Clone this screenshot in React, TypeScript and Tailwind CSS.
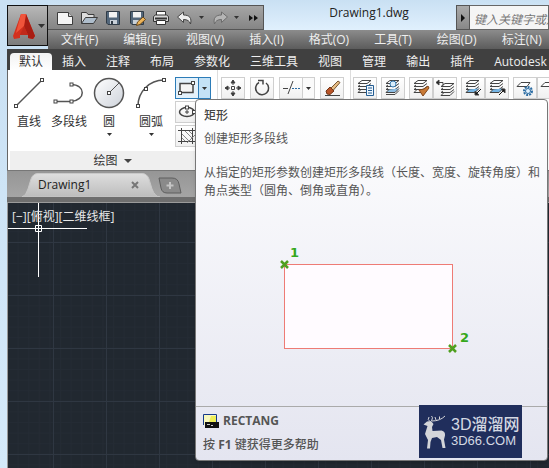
import React from "react";

const menus = ["文件(F)", "编辑(E)", "视图(V)", "插入(I)", "格式(O)", "工具(T)", "绘图(D)", "标注(N)"];
const tabs = ["默认", "插入", "注释", "布局", "参数化", "三维工具", "视图", "管理", "输出", "插件", "Autodesk"];

const Node = ({ x, y }: { x: number; y: number }) => (
  <rect x={x - 1.5} y={y - 1.5} width="3" height="3" fill="#fff" stroke="#444" />
);

const Down = ({ className = "" }: { className?: string }) => (
  <svg viewBox="0 0 5 3" className={`h-[3px] w-[5px] ${className}`}>
    <path d="M0 0h5L2.500 3z" fill="#333" />
  </svg>
);

const QuickButton = ({ label, children }: { label: string; children: React.ReactNode }) => (
  <button aria-label={label} className="flex w-6 shrink-0 items-center justify-center">
    <svg viewBox="0 0 18 16" className="h-4 w-[18px]">{children}</svg>
  </button>
);

const BigButton = ({ label, menu, children }: { label: string; menu?: boolean; children: React.ReactNode }) => (
  <button className="flex w-10 flex-col items-center whitespace-nowrap">
    <svg viewBox="0 0 32 32" fill="none" stroke="#555" className="h-8 w-8">{children}</svg>
    <span className="mt-1 leading-[18px]">{label}</span>
    {menu && <Down className="mt-0.5" />}
  </button>
);

const Tool = ({ label, children }: { label: string; children: React.ReactNode }) => (
  <button aria-label={label} className="flex h-[22px] w-6 shrink-0 items-center justify-center border border-[#cfcfcf] bg-gradient-to-b from-white to-[#f0f0f0]">
    <svg viewBox="0 0 20 18" fill="none" stroke="#444" className="h-[18px] w-5">{children}</svg>
  </button>
);

const Sheets = ({ blue = "none" }: { blue?: string }) => (
  <>
    <path d="M7 1.500h9l-4 3H3z" fill="#fff" />
    <path d="M5 6L3 7.500h9l4-3M5 9L3 10.500h9l4-3" />
    <path d="M6 10.500L3 13.500h9l4-4" fill={blue} />
  </>
);

const TitleBar = () => (
  <div className="flex h-[30px] bg-gradient-to-b from-[#c9e0f3] to-[#e0f0fd] pt-[5px]">
    <div className="flex w-[216px] shrink-0 items-center border border-l-0 border-[#555] bg-gradient-to-b from-[#a5a5a5] to-[#858585] pl-[5px]">
      <QuickButton label="新建">
        <path d="M1.500 2.500h11l4 4v8h-15z" fill="#f4f4f4" stroke="#3c3c3c" />
        <path d="M12.500 2.500v4h4" fill="#ccc" stroke="#3c3c3c" />
      </QuickButton>
      <QuickButton label="打开">
        <path d="M1.500 13.500v-11h5l1.500 2h6v2.500" fill="#ddd" stroke="#3c3c3c" />
        <path d="M1.500 13.500l4-6h12l-4 6z" fill="#aebdcb" stroke="#3c3c3c" />
      </QuickButton>
      <QuickButton label="保存">
        <path d="M2.500 1.500h13v13h-11.500l-1.500-1.500z" fill="#53677b" stroke="#303b46" />
        <path d="M5 2h8v5.500H5z" fill="#f2f2f2" /><path d="M6 10h7v4H6z" fill="#c8d0d8" /><path d="M7 11h2v3H7z" fill="#303b46" />
      </QuickButton>
      <QuickButton label="另存为">
        <path d="M2.500 1.500h13v13h-11.500l-1.500-1.500z" fill="#53677b" stroke="#303b46" />
        <path d="M5 2h8v5.500H5z" fill="#f2f2f2" /><path d="M5 10h6v4H5z" fill="#c8d0d8" />
        <path d="M8.500 15.500l1-3.500 5.500-5 2.500 2.500-5.500 5z" fill="#edb45a" stroke="#6b4a1c" />
      </QuickButton>
      <QuickButton label="打印">
        <path d="M4.500 6V1.500h9V6" fill="#fff" stroke="#333" />
        <path d="M1.500 6.500l2-1.500h11l2 1.500v5h-15z" fill="#d7d7d7" stroke="#333" />
        <path d="M3 8.500h12" stroke="#333" strokeWidth="2" />
        <path d="M4.500 10.500h9v4h-9z" fill="#fff" stroke="#333" />
      </QuickButton>
      <QuickButton label="放弃">
        <path d="M1.500 7l6-5v3c6 0 8.500 3 7 9-1-3-3-4.500-7-4.500v3z" fill="#eee" stroke="#444" />
      </QuickButton>
      <Down className="mr-1 ml-0.5 shrink-0" />
      <QuickButton label="重做">
        <path d="M16.500 7l-6-5v3c-6 0-8.500 3-7 9 1-3 3-4.500 7-4.500v3z" fill="#b5b5b5" stroke="#6c6c6c" />
      </QuickButton>
      <Down className="mr-2.5 ml-0.5 shrink-0" />
      <svg viewBox="0 0 9 6" className="h-1.5 w-[9px] shrink-0"><path d="M0 0l4 3-4 3zM5 0l4 3-4 3z" fill="#111" /></svg>
    </div>
    <h1 className="flex-1 pl-[18px] text-center text-[12px] leading-4 text-[#222]">Drawing1.dwg</h1>
    <button aria-label="展开搜索" className="flex w-[14px] items-center justify-center border border-[#555] bg-gradient-to-b from-[#aaa] to-[#888]">
      <svg viewBox="0 0 4 8" className="h-2 w-1"><path d="M0 0l4 4-4 4z" fill="#111" /></svg>
    </button>
    <input aria-label="搜索" placeholder="键入关键字或短语" className="w-[79px] border border-l-0 border-[#666] bg-[#f5f5f5] pt-1 pl-1 italic placeholder:text-[#777]" />
  </div>
);

const DrawPanel = () => (
  <section className="flex w-[210px] shrink-0 flex-col border-r border-[#ddd]">
    <div className="flex flex-1 pt-[7px] pl-px">
      <BigButton label="直线">
        <path d="M3 29L29 3" strokeWidth="1.500" /><Node x={3} y={29} /><Node x={29} y={3} />
      </BigButton>
      <BigButton label="多段线">
        <path d="M2 24.500h16c15-1 15-17 0-17" strokeWidth="1.500" /><Node x={2.5} y={24.500} /><Node x={18.500} y={24.500} /><Node x={18.500} y={7.500} />
      </BigButton>
      <BigButton label="圆" menu>
        <defs>
          <linearGradient id="disc" x1="0" y1="0" x2="1" y2="1"><stop stopColor="#fff" /><stop offset="1" stopColor="#cdd2da" /></linearGradient>
        </defs>
        <circle cx="16" cy="16" r="14.500" fill="url(#disc)" strokeWidth="1.500" />
        <path d="M16 16L26 6" /><Node x={16} y={16} />
      </BigButton>
      <div className="pl-0.5">
        <BigButton label="圆弧" menu>
          <path d="M3 29C3 15 14 3 29 3" strokeWidth="1.500" /><Node x={3} y={29} /><Node x={11} y={12} /><Node x={29} y={3} />
        </BigButton>
      </div>
      <div className="flex flex-col gap-0.5 pl-1">
        <div className="flex">
          <button aria-label="矩形" className="flex h-[22px] w-6 items-center justify-center border border-[#2c7cb8] bg-[#e3f1fb]">
            <svg viewBox="0 0 20 18" fill="none" stroke="#444" className="h-[18px] w-5">
              <path d="M3 4.500h13v9H3z" strokeWidth="1.500" fill="#f4f4f4" /><Node x={3} y={14} /><Node x={16} y={4} />
            </svg>
          </button>
          <button aria-label="矩形选项" className="flex h-[22px] w-3 items-center justify-center border border-l-0 border-[#2c7cb8] bg-[#c4e2f6]"><Down /></button>
        </div>
        <Tool label="椭圆"><ellipse cx="10" cy="9" rx="7.500" ry="4.500" strokeWidth="1.500" /><path d="M10 7v4M8 9h4" /><Node x={17} y={9} /><Node x={10} y={4.500} /></Tool>
        <Tool label="图案填充"><path d="M4.500 1v16M15.500 1v16M1 3.500h18M1 14.500h18" /><path d="M5 7l7 7M5 11l3 3M8 4l7 7M12 4l3 3M10 16l8-8" stroke="#888" /></Tool>
      </div>
    </div>
    <button className="mx-0.5 flex h-[19px] items-center justify-center gap-1.5 bg-[#efefef]">
      绘图
      <svg viewBox="0 0 8 4" className="h-1 w-2"><path d="M0 0h8L4 4z" fill="#444" /></svg>
    </button>
  </section>
);

const ModifyPanel = () => (
  <section className="flex w-[133px] shrink-0 items-start gap-[5px] border-r border-[#ddd] pt-[7px] pl-[3px]">
    <Tool label="移动">
      <path d="M8.500 7.500h3v3h-3zM10 1v5M10 12v5M2 9h5M13 9h5" /><path d="M8 4l2-3 2 3zM8 14l2 3 2-3zM5 7L2 9l3 2zM15 7l3 2-3 2z" fill="#333" />
    </Tool>
    <Tool label="旋转"><path d="M7 3.500a6.500 6.500 0 1 0 7 0.500" strokeWidth="1.500" /><path d="M6 1.500h5v4" strokeWidth="1.500" /></Tool>
    <div className="flex">
      <Tool label="修剪"><path d="M2 9.500h5M7 15l5-13" /><path d="M11 9.500h8" stroke="#2b6ca3" strokeDasharray="2 1" /></Tool>
      <button aria-label="修剪选项" className="flex h-[22px] w-3 items-center justify-center border border-l-0 border-[#cfcfcf] bg-[#fafafa]"><Down /></button>
    </div>
    <Tool label="删除">
      <path d="M3 16.500h15" /><path d="M9 9l7-7 2 1.500-7 8z" fill="#e7bd85" stroke="#765532" /><path d="M4 12l4-4 4 4-4 3.500-3-.500z" fill="#b95427" stroke="#713517" />
    </Tool>
  </section>
);

const LayerPanel = () => (
  <section className="flex flex-1 items-start gap-1 overflow-hidden pt-[7px] pl-0.5">
    <Tool label="图层特性"><Sheets /><path d="M11.500 6.500h7v10h-7z" fill="#eef6fd" stroke="#245d92" /><path d="M13 9h4M13 11.500h4M13 14h4" stroke="#245d92" /></Tool>
    <Tool label="图层"><Sheets blue="#8dbde3" /><circle cx="10" cy="5" r="3" fill="#d9ecfa" stroke="#3477ad" /><path d="M3 15.500h9l4-4" /></Tool>
    <div className="flex">
      <Tool label="匹配图层"><Sheets /><path d="M8 11l5-1 4-3 1 2-3 4-3 4z" fill="#c97a36" stroke="#82471b" /></Tool>
      <Tool label="上一个图层"><g transform="translate(3 3)"><Sheets /></g><path d="M2 3.500h6v3" /><path d="M4 1L1 3.500 4 6z" fill="#222" /></Tool>
    </div>
    <div className="flex">
      <Tool label="置为当前"><Sheets blue="#75b5e5" /><path d="M18 10l-4 4" stroke="#111" /><path d="M12 12v4h4z" fill="#111" /></Tool>
      <Tool label="更改图层"><Sheets blue="#75b5e5" /><path d="M12 16l4-4" stroke="#111" /><path d="M14 10h4v4z" fill="#111" /></Tool>
    </div>
    <div className="flex">
      <Tool label="冻结"><path d="M6 3.500h9l-3 4H2z" fill="#fff" /><circle cx="13" cy="12" r="4" stroke="#2b6ca3" strokeWidth="2" strokeDasharray="2 1" /><circle cx="13" cy="12" r="2.500" fill="#e4f3ff" stroke="#2b6ca3" /></Tool>
      <Tool label="关闭图层"><path d="M6 3.500h9l-3 4H2z" fill="#fff" /><circle cx="14" cy="12" r="3" stroke="#2b6ca3" /></Tool>
    </div>
  </section>
);

const FileTabs = () => (
  <div className="flex h-[27px] items-end border-t border-[#777] bg-gradient-to-b from-[#969696] to-[#a5a5a5] pl-[15px]">
    <div className="relative h-6 w-[138px]">
      <svg viewBox="0 0 138 24" preserveAspectRatio="none" className="absolute h-full w-full">
        <defs><linearGradient id="filetab" x1="0" y1="0" x2="0" y2="1"><stop stopColor="#dedede" /><stop offset="1" stopColor="#bcbcbc" /></linearGradient></defs>
        <path d="M0 24Q4 23 6 16L9 6Q11 .500 16 .500H120Q125 .500 127 6L130 16Q133 24 138 24z" fill="url(#filetab)" stroke="#c8c8c8" />
      </svg>
      <div className="relative flex h-6 items-center pr-[21px] pl-4">
        <a href="#drawing1" className="flex-1 text-[12px] text-[#222]">Drawing1</a>
        <button aria-label="关闭"><svg viewBox="0 0 8 8" className="h-2 w-2"><path d="M1 1l6 6M7 1L1 7" stroke="#777" strokeWidth="2" /></svg></button>
      </div>
    </div>
    <button aria-label="新图形" className="mb-[3px] -ml-0.5">
      <svg viewBox="0 0 24 17" className="h-[17px] w-6">
        <path d="M1 1h13Q20 1 21 7l2 9H9Q4 16 3 11z" fill="#8a8a8a" stroke="#5e5e5e" />
        <path d="M12 5v7M8.500 8.500h7" stroke="#c4c4c4" strokeWidth="2" />
      </svg>
    </button>
  </div>
);

const Canvas = () => (
  <main className="relative flex-1 border-t border-l border-[#9a9a9a] bg-[#212830]">
    <svg className="absolute h-full w-full">
      <defs>
        <pattern id="minor" x="-1" y="7" width="10.600" height="10.600" patternUnits="userSpaceOnUse"><path d="M.500 0v11M0 .500h11" stroke="#242b34" fill="none" /></pattern>
        <pattern id="major" x="45" y="39" width="53" height="53" patternUnits="userSpaceOnUse"><path d="M.500 0v53M0 .500h53" stroke="#2f3742" fill="none" /></pattern>
      </defs>
      <rect width="100%" height="100%" fill="url(#minor)" />
      <rect width="100%" height="100%" fill="url(#major)" />
      <path d="M30.500 0v74M0 25.500h79M27.500 22.500h6v6h-6z" fill="none" stroke="#fff" />
    </svg>
    <p className="relative pt-[5px] pl-1 leading-[18px] text-[#e8e8e8]">[−][俯视][二维线框]</p>
  </main>
);

const Tooltip = () => (
  <aside role="tooltip" className="absolute top-[99px] right-px left-[195px] flex flex-col rounded-sm border border-[#777] bg-gradient-to-b from-white to-[#e4e5f0] text-[#555] shadow-md">
    <div className="pt-[7px] pr-1 pl-2">
      <h2 className="text-[12px] leading-[18px] font-medium text-[#444]">矩形</h2>
      <p className="mt-[5px] leading-[18px]">创建矩形多段线</p>
      <p className="mt-4 leading-[18px]">从指定的矩形参数创建矩形多段线（长度、宽度、旋转角度）和角点类型（圆角、倒角或直角）。</p>
    </div>
    <svg viewBox="0 0 200 120" className="mt-[39px] ml-20 h-[120px] w-[200px] font-['DejaVu_Sans',sans-serif] text-[13px] font-bold">
      <rect x="8.500" y="25.500" width="168" height="84" fill="#fffbff" stroke="#ee7b75" />
      <path d="M5 22l7 7M12 22l-7 7M173 106l7 7M180 106l-7 7" stroke="#4f9f1f" strokeWidth="2.500" />
      <g fill="#35a81c"><text x="14" y="18">1</text><text x="184" y="103">2</text></g>
    </svg>
    <footer className="mt-[47px] border-t border-[#aaa] px-[7px] pt-[5px] pb-1.5 font-bold">
      <div className="flex items-center gap-1 text-[12px] leading-[18px]">
        <svg viewBox="0 0 16 16" className="h-4 w-4">
          <path d="M0 1h14v11H0z" fill="#f8f8bd" /><path d="M8 3h6v6H6z" fill="#eeee56" /><path d="M.500 12V1.500h13V9" fill="none" stroke="#163a8c" />
          <path d="M2 9h14v6H2z" fill="#111" /><path d="M4 11.500h3M8 12.500h2" stroke="#ccc" />
        </svg>
        RECTANG
      </div>
      <p className="mt-1.5 leading-[18px] font-medium">按 <b>F1</b> 键获得更多帮助</p>
    </footer>
  </aside>
);

const Watermark = () => (
  <div className="absolute right-[27px] bottom-[10px] flex h-[53px] w-[103px] items-center gap-1 bg-[#202e5c] pl-1 whitespace-nowrap text-[#d4d8e2]">
    <svg viewBox="0 0 24 34" className="h-[34px] w-6 shrink-0">
      <path d="M0.500 9.500L4 6.500 8 6l2.500 3-1.500 3 .500 4 9-.500q4 1 3.500 5l-1 4 1.500 8.500h-3L18 25l-4-3-5 1-1.500 4-.500 6.500H4L5 25 2 19l2.500-8z" fill="#d4d5d9" />
      <path d="M7 6.500Q4 5 6 2M8.500 6q2-4 0-5M9 6q8 0 13-5M13 5l-1-3M16.500 4V1.500" fill="none" stroke="#d4d5d9" />
    </svg>
    <div className="flex flex-col items-start font-['Liberation_Sans','Noto_Sans_CJK_SC',sans-serif]">
      <span className="text-[16px] leading-[18px] font-medium">3D溜溜网</span>
      <span className="text-[13px] leading-[14px]">3D66.COM</span>
    </div>
  </div>
);

const App = () => (
  <div className="relative flex min-h-screen overflow-hidden bg-gradient-to-b from-[#c9e0f3] to-[#d5eafa] font-['Open_Sans','Noto_Sans_CJK_SC',sans-serif] text-[12px] text-[#333]">
    <div className="flex min-w-0 flex-1 flex-col pl-[7px]">
      <div className="flex">
        <div className="flex shrink-0 pt-[5px]">
          <button aria-label="应用程序菜单" className="flex h-[41px] w-[41px] items-center gap-0.5 border border-[#111] bg-gradient-to-b from-[#b8b8b8] to-[#7c7c7c] pl-1">
            <svg viewBox="0 0 24 28" className="h-7 w-6 shrink-0">
              <path d="M9 2h5l9 22-2 3-5-1v-3H8v3l-6 1-1-3z" fill="#d3301e" />
              <path d="M14 2l9 22-2 3-5-1v-3l-4-9z" fill="#a81d13" />
              <path d="M9 2h5l-2 12-8 7z" fill="#f0543b" />
              <path d="M12 14l4 9H8z" fill="#c02a1b" />
            </svg>
            <svg viewBox="0 0 7 4" className="h-1 w-[7px] shrink-0"><path d="M0 0h7L3.500 4z" fill="#333" /></svg>
          </button>
        </div>
        <div className="min-w-0 flex-1">
          <TitleBar />
          <nav className="flex h-[19px] items-center gap-[25px] bg-gradient-to-b from-[#8c8c8c] to-[#5c5c5c] pl-[13px] whitespace-nowrap text-[#eee]">
            {menus.map((m) => <button key={m}>{m}</button>)}
          </nav>
        </div>
      </div>
      <nav className="flex h-[21px] items-end overflow-hidden bg-[#404040] pl-[3px] whitespace-nowrap text-[#eee]">
        {tabs.map((t, i) => (
          <button key={t} className={i === 0 ? "h-[17px] rounded-t-sm bg-gradient-to-b from-[#f2f2f2] to-white px-[9px] leading-[17px] text-[#333]" : i === tabs.length - 1 ? "h-[17px] pl-[10px] leading-[17px]" : "h-[17px] px-[10px] leading-[17px]"}>{t}</button>
        ))}
      </nav>
      <div className="flex h-[100px] border-l border-[#666] bg-white">
        <DrawPanel />
        <ModifyPanel />
        <LayerPanel />
      </div>
      <FileTabs />
      <div className="h-[5px] bg-[#6e6e6e]" />
      <Canvas />
    </div>
    <Tooltip />
    <Watermark />
  </div>
);

export default App;
